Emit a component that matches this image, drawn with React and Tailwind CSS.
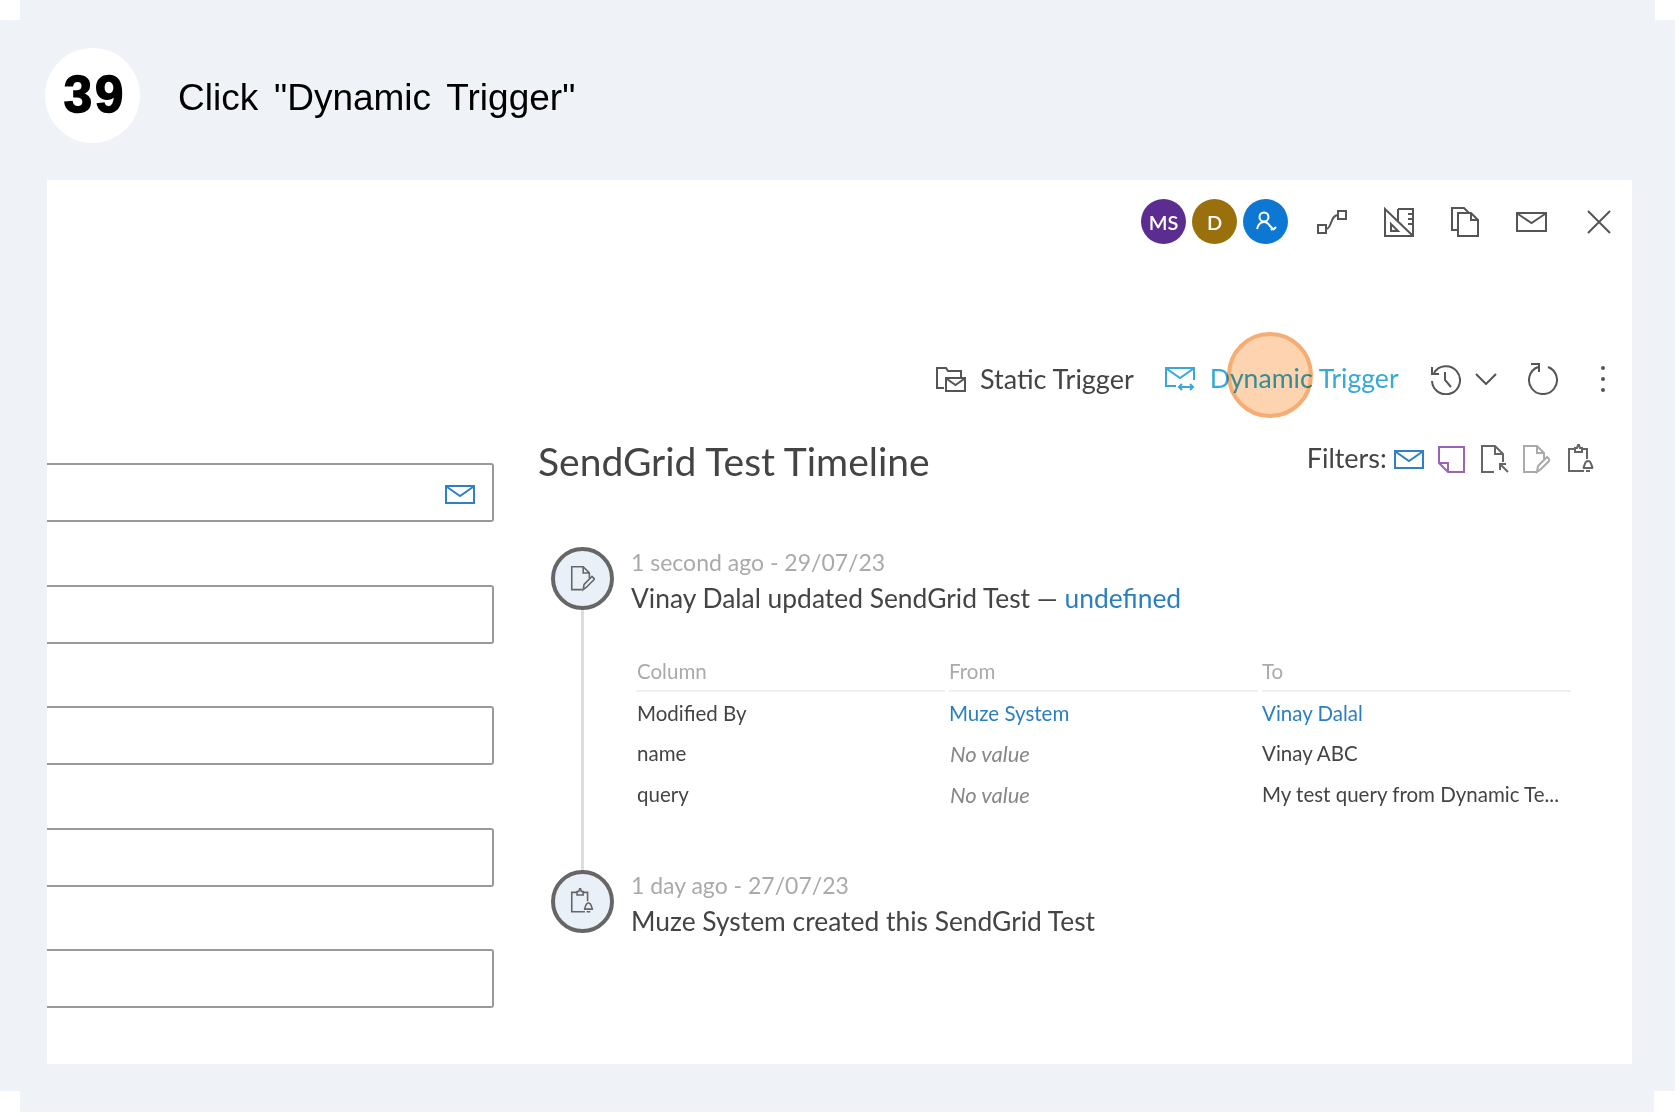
const Icon = ({ w, h, className = "", sw = 2, children }) => (
  <svg width={w} height={h} viewBox={`0 0 ${w} ${h}`} fill="none" stroke="currentColor" strokeWidth={sw} className={`shrink-0 ${className}`}>
    {children}
  </svg>
);

const MailIcon = ({ className }) => (
  <Icon w={30} h={19} className={className}>
    <rect x="1" y="1" width="28" height="17" />
    <path d="M2 2l13 9 13-9" />
  </Icon>
);

const DocPencil = ({ className, scale = 1, sw = 2 }) => (
  <Icon w={28 * scale} h={30 * scale} className={className} sw={sw}>
    <g transform={`scale(${scale})`}>
      <path d="M14 28H2V2h13l7 7v6M15 2v7h7" />
      <path d="M15 28l1-6 9-9 3 3-9 9z" />
    </g>
  </Icon>
);

const ClipboardBell = ({ className, scale = 1, sw = 2 }) => (
  <Icon w={28 * scale} h={30 * scale} className={className} sw={sw}>
    <g transform={`scale(${scale})`}>
      <path d="M8 5H2v22h15M20 15V5h-6M8 8V4h2l1-3h1l1 3h2v4z" />
      <path d="M16 24c2-1 1-7 5-7s3 6 5 7zM19 27h4" />
    </g>
  </Icon>
);

const TableRow = ({ a, b, c }) => (
  <>
    <div className="h-[40.5px] pl-[1px] flex items-center text-[#444]">{a}</div>
    <div className="h-[40.5px] flex items-center">{b}</div>
    <div className="h-[40.5px] flex items-center">{c}</div>
  </>
);

const Corner = ({ className }) => <div className={`absolute bg-white ${className}`} />;

const TextField = ({ children }) => (
  <div className="h-[59px] border-y-2 border-r-2 border-[#999] rounded-r-[3px] flex items-center justify-end pr-[17px]">
    {children}
  </div>
);

export default function App() {
  return (
    <div className="w-[1680px] h-[1116px] bg-white overflow-hidden">
      <div className="relative w-[1675px] h-[1112px] bg-[#eff2f7] pt-[48px] font-['Lato',sans-serif]">
        <Corner className="left-0 top-0 w-[20px] h-[20px]" />
        <Corner className="right-0 top-0 w-[20px] h-[20px]" />
        <Corner className="left-0 bottom-0 w-[20px] h-[21px]" />
        <Corner className="right-0 bottom-0 w-[21px] h-[21px]" />

        {/* step heading */}
        <div className="flex items-center pl-[45px] h-[95px]">
          <div className="w-[95px] h-[95px] pl-[5px] rounded-full bg-white flex items-center justify-center text-[51px] font-bold tracking-[3px] text-black font-['Liberation_Sans',sans-serif] [-webkit-text-stroke:1.5px_black]">
            39
          </div>
          <div className="ml-[38px] mt-[4px] text-[37px] text-black font-['Liberation_Sans',sans-serif] [word-spacing:5.6px]">
            Click "Dynamic Trigger"
          </div>
        </div>

        {/* screenshot card */}
        <div className="relative ml-[47px] mt-[37px] w-[1585px] h-[884px] bg-white">
          <div className="flex items-center pt-[19px] pl-[1094px] h-[64px] text-[#555]">
            <div className="w-[45px] h-[45px] rounded-full bg-[#5b2d91] text-white text-[20px] font-semibold flex items-center justify-center">MS</div>
            <div className="ml-[6px] w-[45px] h-[45px] rounded-full bg-[#99700c] text-white text-[20px] font-semibold flex items-center justify-center">D</div>
            <div className="ml-[6px] w-[45px] h-[45px] rounded-full bg-[#0d78d4] text-white flex items-center justify-center">
              <Icon w={22} h={22} sw={2}>
                <circle cx="9" cy="6" r="4.500" />
                <path d="M2 18c1-4 3-7 7-7 3 0 4 1 6 4l4 4M18 17l-2 2M21 16l-2 2" />
              </Icon>
            </div>
            <Icon w={30} h={24} className="ml-[29px]">
              <rect x="1" y="15" width="8" height="8" />
              <rect x="21" y="1" width="8" height="8" />
              <path d="M9 19c6 0 4-14 12-14" />
            </Icon>
            <Icon w={30} h={30} className="ml-[37px]">
              <path d="M1 2l28 27H1z" />
              <path d="M7 17l7 7H7zM14 2h15v27M14 2v13M24 7h5M24 12h5M24 17h5" />
            </Icon>
            <Icon w={28} h={30} className="ml-[37px]">
              <path d="M7 23H1V1h12l5 5" />
              <path d="M7 6h13l7 7v16H7zM20 6v7h7" />
            </Icon>
            <Icon w={31} h={20} className="ml-[37px]">
              <rect x="1" y="1" width="29" height="18" />
              <path d="M2 2l13.500 9L29 2" />
            </Icon>
            <Icon w={24} h={24} className="ml-[40px]" sw={2}>
              <path d="M1 1l22 22M23 1L1 23" />
            </Icon>
          </div>

          {/* trigger toolbar */}
          <div className="relative mt-[115px] h-10 pl-[888px] flex items-center">
            <Icon w={31} h={26} className="text-[#555]">
              <path d="M9 22H2V2h9l2 3h13v6" />
              <rect x="11" y="12" width="19" height="13" />
              <path d="M12 13l8.500 6 8.500-6" />
            </Icon>
            <span className="ml-[14px] text-[27px] text-[#444]">Static Trigger</span>
            <Icon w={30} h={24} className="ml-[31px] text-[#3aa7dc]">
              <path d="M11 19H1V1h28v12" />
              <path d="M2 2l13 9 13-9M14 20h14M17 17l-3 3 3 3M25 17l3 3-3 3" />
            </Icon>
            <span className="ml-[15px] text-[26.6px] text-[#36a9d6]">Dynamic Trigger</span>
            <Icon w={32} h={31} className="ml-[30px] text-[#555]">
              <path d="M5 9a14 14 0 1 1-2 8M3 3v7h7M16 8v8l6 7" />
            </Icon>
            <Icon w={22} h={12} className="ml-[14px] text-[#555]">
              <path d="M1 1l10 10L21 1" />
            </Icon>
            <Icon w={32} h={32} className="ml-[30px] text-[#555]">
              <path d="M21 4a14 14 0 1 1-10 0M4 1h8v8" />
            </Icon>
            <div className="ml-[42px] flex flex-col gap-[7px]">
              <div className="w-[4px] h-[4px] rounded-full bg-[#555]" />
              <div className="w-[4px] h-[4px] rounded-full bg-[#555]" />
              <div className="w-[4px] h-[4px] rounded-full bg-[#555]" />
            </div>
            <div className="absolute left-[1180px] top-[-27px] w-[86px] h-[86px] rounded-full bg-[#fdd3b0] mix-blend-multiply border-[4px] border-[#f6ad73]" />
          </div>

          <div className="flex mt-[41px]">
            {/* cropped form */}
            <div className="w-[447px] pt-[23px] flex flex-col gap-[62.5px]">
              <TextField>
                <MailIcon className="mt-[3px] text-[#2f80c4]" />
              </TextField>
              <TextField />
              <TextField />
              <TextField />
              <TextField />
            </div>

            {/* timeline */}
            <div className="ml-[44px] flex-1">
              <div className="flex items-center h-[46px]">
                <h1 className="-mt-[4px] text-[39px] text-[#444] leading-[46px]">SendGrid Test Timeline</h1>
                <span className="ml-[377px] -mt-[10px] text-[27px] text-[#444]">Filters:</span>
                <div className="ml-[7px] -mt-[8px] flex items-center">
                  <MailIcon className="text-[#2f80c4]" />
                  <Icon w={27} h={27} className="ml-[14px] text-[#9a63b8]">
                    <path d="M1 1h25v25H10L1 17zM1 17h9v9" />
                  </Icon>
                  <Icon w={29} h={30} className="ml-[15px] text-[#666]">
                    <path d="M14 28H2V2h13l8 8v8M15 2v8h8M28 28l-8-8M20 26v-6h6" />
                  </Icon>
                  <DocPencil className="ml-[13px] text-[#aaa]" />
                  <ClipboardBell className="ml-[17px] text-[#666]" />
                </div>
              </div>

              <div className="ml-[13px] mt-[61px]">
                <div className="flex h-[323px]">
                  <div className="w-[63px] flex flex-col items-center">
                    <div className="w-[63px] h-[63px] rounded-full bg-[#e9f0f7] border-[4px] border-[#666] flex items-center justify-center text-[#666]">
                      <DocPencil scale={0.88} sw={1.8} />
                    </div>
                    <div className="w-[3px] flex-1 bg-[#ddd]" />
                  </div>
                  <div className="ml-[17px] -mt-[1px] flex-1">
                    <div className="h-8 flex items-center text-[23px] text-[#aaa]">1 second ago - 29/07/23</div>
                    <div className="mt-[3px] h-9 flex items-center text-[26.4px] text-[#444] whitespace-pre">
                      Vinay Dalal updated SendGrid Test — <span className="text-[#2b7fc0]">undefined</span>
                    </div>
                    <div className="mt-[36px] ml-[5px] w-[935px] grid grid-cols-3 gap-x-1 text-[20.5px]">
                      <div className="h-[39px] pl-[1px] flex items-center border-b-2 border-[#f0eeee] text-[#aaa]">Column</div>
                      <div className="h-[39px] flex items-center border-b-2 border-[#f0eeee] text-[#aaa]">From</div>
                      <div className="h-[39px] flex items-center border-b-2 border-[#f0eeee] text-[#aaa]">To</div>
                      <div className="col-span-3 h-[1px]" />
                      <TableRow
                        a="Modified By"
                        b={<span className="text-[#2b7fc0]">Muze System</span>}
                        c={<span className="text-[#2b7fc0]">Vinay Dalal</span>}
                      />
                      <TableRow
                        a="name"
                        b={<span className="pl-[1px] text-[22px] italic text-[#888]">No value</span>}
                        c={<span className="text-[#444]">Vinay ABC</span>}
                      />
                      <TableRow
                        a="query"
                        b={<span className="pl-[1px] text-[22px] italic text-[#888]">No value</span>}
                        c={<span className="text-[#444] whitespace-nowrap">My test query from Dynamic Te...</span>}
                      />
                    </div>
                  </div>
                </div>

                <div className="flex">
                  <div className="w-[63px] h-[63px] rounded-full bg-[#e9f0f7] border-[4px] border-[#666] flex items-center justify-center text-[#666]">
                    <ClipboardBell scale={0.88} sw={1.8} />
                  </div>
                  <div className="ml-[17px] -mt-[1px] flex-1">
                    <div className="h-8 flex items-center text-[23px] text-[#aaa]">1 day ago - 27/07/23</div>
                    <div className="mt-[3px] h-9 flex items-center text-[26.4px] text-[#444]">Muze System created this SendGrid Test</div>
                  </div>
                </div>
              </div>
            </div>
          </div>
        </div>
      </div>
    </div>
  );
}
